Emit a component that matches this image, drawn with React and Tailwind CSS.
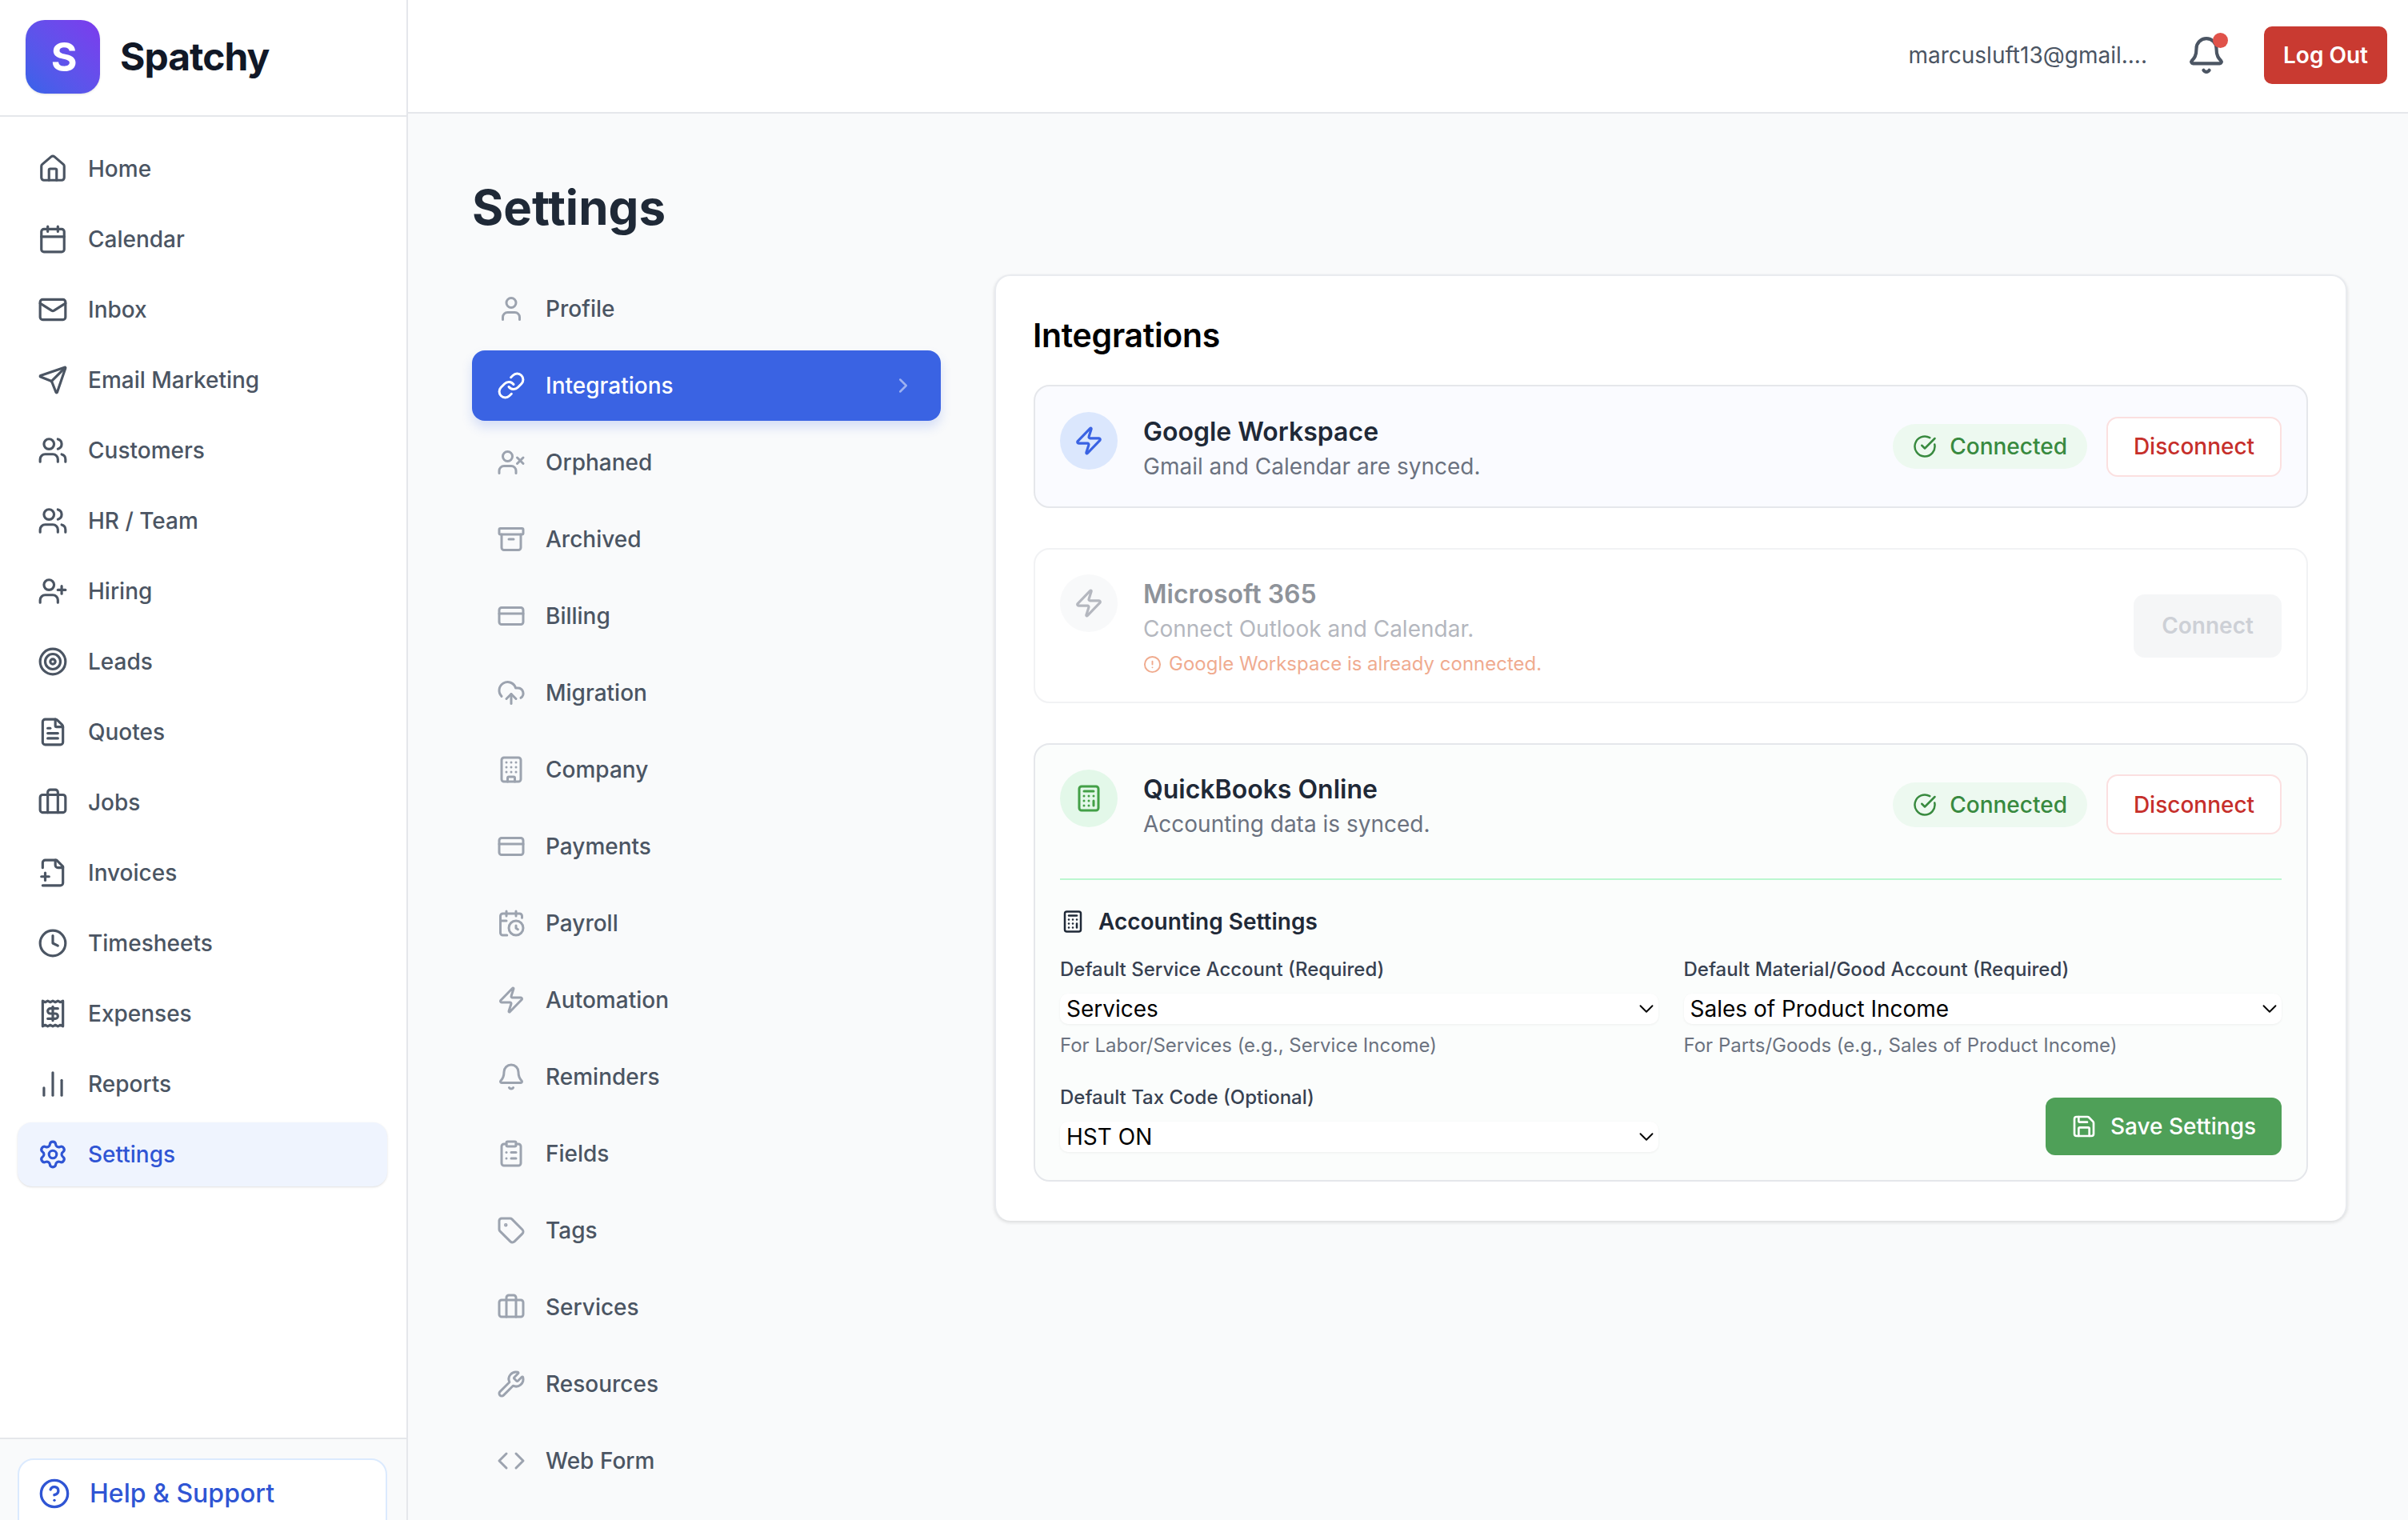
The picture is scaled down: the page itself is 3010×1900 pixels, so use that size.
import React from 'react';
import {
  House, Calendar, Mail, Send, Users, UserPlus, Target, FileText, Briefcase, Clock, Receipt,
  ChartNoAxesColumn, Settings, CircleHelp, Bell, User, Link, UserX, Archive, CreditCard, CloudUpload,
  Building, CalendarClock, Zap, ClipboardList, Tag, Wrench, Code, ChevronRight, ChevronDown, CircleCheckBig,
  CircleAlert, Calculator, Save,
} from 'lucide-react';

// file outline with the plus sitting on the left edge
const FilePlusIcon = ({ size }) => (
  <svg width={size} height={size} viewBox="0 0 24 24" fill="none" stroke="currentColor" strokeWidth="2" strokeLinecap="round" strokeLinejoin="round" className="shrink-0">
    <path d="M4 22h14a2 2 0 0 0 2-2V7l-5-5H6a2 2 0 0 0-2 2v4" />
    <path d="M14 2v4a2 2 0 0 0 2 2h4" />
    <path d="M3 15h6" />
    <path d="M6 12v6" />
  </svg>
);

const mainNav = [
  { label: 'Home', icon: House },
  { label: 'Calendar', icon: Calendar },
  { label: 'Inbox', icon: Mail },
  { label: 'Email Marketing', icon: Send },
  { label: 'Customers', icon: Users },
  { label: 'HR / Team', icon: Users },
  { label: 'Hiring', icon: UserPlus },
  { label: 'Leads', icon: Target },
  { label: 'Quotes', icon: FileText },
  { label: 'Jobs', icon: Briefcase },
  { label: 'Invoices', icon: FilePlusIcon },
  { label: 'Timesheets', icon: Clock },
  { label: 'Expenses', icon: Receipt },
  { label: 'Reports', icon: ChartNoAxesColumn },
  { label: 'Settings', icon: Settings, active: true },
];

const settingsNav = [
  { label: 'Profile', icon: User },
  { label: 'Integrations', icon: Link, active: true },
  { label: 'Orphaned', icon: UserX },
  { label: 'Archived', icon: Archive },
  { label: 'Billing', icon: CreditCard },
  { label: 'Migration', icon: CloudUpload },
  { label: 'Company', icon: Building },
  { label: 'Payments', icon: CreditCard },
  { label: 'Payroll', icon: CalendarClock },
  { label: 'Automation', icon: Zap },
  { label: 'Reminders', icon: Bell },
  { label: 'Fields', icon: ClipboardList },
  { label: 'Tags', icon: Tag },
  { label: 'Services', icon: Briefcase },
  { label: 'Resources', icon: Wrench },
  { label: 'Web Form', icon: Code },
];

const Sidebar = () => (
  <aside className="w-[510px] shrink-0 h-full flex flex-col bg-white border-r-2 border-[#e5e7eb]">
    <div className="h-[146px] shrink-0 flex items-center gap-[25px] pl-[32px] pb-[2px] border-b-2 border-[#e5e7eb]">
      <div className="w-[93px] h-[92px] pl-[3px] rounded-[24px] bg-linear-to-tr from-[#3563e9] to-[#7c3aed] shadow-sm flex items-center justify-center text-white font-bold text-[50px]">
        S
      </div>
      <span className="text-[48px] font-bold text-[#111827] tracking-[-1px]">Spatchy</span>
    </div>

    <nav className="flex-1 flex flex-col gap-[8px] pl-[22px] pr-[24px] pt-[25px]">
      {mainNav.map((item) => (
        <div
          key={item.label}
          className={`h-[80px] shrink-0 flex items-center gap-[25px] pl-[25px] rounded-[18px] text-[28px] font-medium ${
            item.active ? 'bg-[#eff4fe] text-[#2f55d4] shadow-sm' : 'text-[#4b5563]'
          }`}
        >
          <item.icon size={38} strokeWidth={2} />
          <span>{item.label}</span>
        </div>
      ))}
    </nav>

    <div className="h-[103px] shrink-0 bg-[#f9fafb] border-t-2 border-[#e5e7eb] pl-[22px] pr-[24px] pt-[24px]">
      <div className="h-[100px] bg-white border-2 border-[#dbeafe] rounded-[20px] flex items-start gap-[24px] pl-[24px] pt-[22px]">
        <CircleHelp size={40} strokeWidth={2} className="text-[#2f55d4]" />
        <span className="text-[32px] leading-[40px] font-medium text-[#2f55d4]">Help &amp; Support</span>
      </div>
    </div>
  </aside>
);

const Topbar = () => (
  <header className="h-[142px] shrink-0 bg-white border-b-2 border-[#e5e7eb] flex items-center justify-end pr-[26px] pb-[3px]">
    <span className="text-[28px] text-[#4b5563] mr-[49px]">marcusluft13@gmail....</span>
    <div className="relative mr-[47px]">
      <Bell size={50} strokeWidth={2} className="text-[#4b5563]" />
      <span className="absolute top-[-3px] right-[-2px] w-[19px] h-[19px] rounded-full bg-[#e0524a]" />
    </div>
    <button className="w-[154px] h-[72px] rounded-[10px] bg-[#c93a31] text-white text-[28px] font-semibold">Log Out</button>
  </header>
);

const SettingsNav = () => (
  <div className="w-[586px] shrink-0 flex flex-col gap-[8px]">
    {settingsNav.map((item) => (
      <div
        key={item.label}
        className={`h-[88px] shrink-0 flex items-center gap-[25px] pl-[31px] pr-[32px] rounded-[16px] text-[28px] font-medium ${
          item.active
            ? 'bg-[#3a63e3] text-white shadow-[0_8px_14px_rgba(58,99,227,0.18)]'
            : 'text-[#4b5563]'
        }`}
      >
        <item.icon size={36} strokeWidth={2} className={item.active ? 'text-white' : 'text-[#9ca3af]'} />
        <span className="flex-1">{item.label}</span>
        {item.active && <ChevronRight size={30} className="text-white opacity-50" />}
      </div>
    ))}
  </div>
);

const ConnectedActions = () => (
  <div className="flex items-center gap-[24px]">
    <div className="h-[56px] flex items-center gap-[16px] px-[25px] rounded-full bg-[#edf9f0] text-[#388a3f] text-[28px] font-medium">
      <CircleCheckBig size={30} strokeWidth={2} />
      <span>Connected</span>
    </div>
    <button className="w-[219px] h-[75px] rounded-[14px] border-2 border-[#fbe0e0] bg-white text-[#c62f2b] text-[28px] font-medium">
      Disconnect
    </button>
  </div>
);

const Title = ({ children }) => (
  <h3 className="text-[32px] leading-[50px] font-semibold text-[#1f2937]">{children}</h3>
);

const Subtitle = ({ children }) => (
  <p className="-mt-[1px] text-[28px] leading-[38px] text-[#6b7280]">{children}</p>
);

const SelectBox = ({ value }) => (
  <div className="h-[38px] flex items-center justify-between pl-[8px] rounded-[10px] bg-white shadow-[0_1px_3px_rgba(0,0,0,0.06)] text-[28px] text-black">
    <span>{value}</span>
    <ChevronDown size={30} strokeWidth={1.5} />
  </div>
);

const Label = ({ children }) => (
  <label className="block text-[24px] leading-[34px] font-medium text-[#374151]">{children}</label>
);

const Hint = ({ children }) => (
  <p className="mt-[11px] text-[24px] leading-[32px] text-[#6b7280]">{children}</p>
);

const IntegrationsCard = () => (
  <div className="flex-1 mt-[1px] h-[1183px] bg-white border-2 border-[#e9ebef] border-b-0 rounded-[20px] shadow-[0_2px_4px_rgba(0,0,0,0.13)] px-[47px] pt-[46px]">
    <h2 className="text-[41px] leading-[56px] font-semibold text-black tracking-[-0.3px] -ml-[1px]">Integrations</h2>

    {/* Google Workspace */}
    <div className="mt-[34px] h-[154px] flex items-center justify-between border-2 border-[#e5e7eb] rounded-[20px] bg-[#fafbff] px-[31px]">
      <div className="flex items-start gap-[32px]">
        <div className="w-[72px] h-[72px] rounded-full bg-[#dbe7fd] flex items-center justify-center text-[#3a63e3]">
          <Zap size={38} strokeWidth={2} />
        </div>
        <div>
          <Title>Google Workspace</Title>
          <Subtitle>Gmail and Calendar are synced.</Subtitle>
        </div>
      </div>
      <ConnectedActions />
    </div>

    {/* Microsoft 365 */}
    <div className="mt-[50px] h-[194px] flex items-center justify-between border-2 border-[#e5e7eb] rounded-[20px] bg-white px-[31px] opacity-50">
      <div className="flex items-start gap-[32px]">
        <div className="w-[72px] h-[72px] rounded-full bg-[#f3f4f6] flex items-center justify-center text-[#6b7280]">
          <Zap size={38} strokeWidth={2} />
        </div>
        <div>
          <Title>Microsoft 365</Title>
          <Subtitle>Connect Outlook and Calendar.</Subtitle>
          <div className="mt-[9px] h-[32px] flex items-center gap-[9px] text-[24px] text-[#e2591f]">
            <CircleAlert size={23} strokeWidth={2} />
            <span>Google Workspace is already connected.</span>
          </div>
        </div>
      </div>
      <button className="w-[185px] h-[79px] rounded-[14px] bg-[#eceef1] text-[#9ca3af] text-[28px] font-semibold">Connect</button>
    </div>

    {/* QuickBooks Online */}
    <div className="mt-[50px] h-[548px] border-2 border-[#e5e7eb] rounded-[20px] bg-[#fbfdfc] px-[31px] pt-[31px]">
      <div className="flex items-center justify-between">
        <div className="flex items-start gap-[32px]">
          <div className="w-[72px] h-[72px] rounded-full bg-[#e3f8e9] flex items-center justify-center text-[#43a047]">
            <Calculator size={36} strokeWidth={2} />
          </div>
          <div>
            <Title>QuickBooks Online</Title>
            <Subtitle>Accounting data is synced.</Subtitle>
          </div>
        </div>
        <ConnectedActions />
      </div>

      <div className="mt-[49px] border-t-2 border-[#bbf7d0] pt-[32px]">
        <div className="h-[40px] flex items-center gap-[17px] pl-[1px] text-[28px] font-semibold text-[#1f2937]">
          <Calculator size={30} strokeWidth={2} />
          <span>Accounting Settings</span>
        </div>
        <div className="mt-[23px] grid grid-cols-2 gap-x-[32px] gap-y-[32px]">
          <div>
            <Label>Default Service Account (Required)</Label>
            <div className="mt-[13px]"><SelectBox value="Services" /></div>
            <Hint>For Labor/Services (e.g., Service Income)</Hint>
          </div>
          <div>
            <Label>Default Material/Good Account (Required)</Label>
            <div className="mt-[13px]"><SelectBox value="Sales of Product Income" /></div>
            <Hint>For Parts/Goods (e.g., Sales of Product Income)</Hint>
          </div>
          <div className="pb-[4px]">
            <Label>Default Tax Code (Optional)</Label>
            <div className="mt-[13px]"><SelectBox value="HST ON" /></div>
          </div>
          <div className="flex items-end justify-end">
            <button className="w-[295px] h-[72px] rounded-[12px] bg-[#4fa058] text-white text-[28px] font-medium flex items-center justify-center gap-[17px]">
              <Save size={32} strokeWidth={2} />
              <span>Save Settings</span>
            </button>
          </div>
        </div>
      </div>
    </div>
  </div>
);

const App = () => (
  <div className="w-[3010px] h-[1900px] flex overflow-hidden bg-[#f9fafb] [font-family:Inter,sans-serif]">
    <Sidebar />
    <main className="flex-1 flex flex-col min-w-0">
      <Topbar />
      <div className="flex-1 pl-[80px] pr-[76px] pt-[82px] overflow-hidden">
        <h1 className="text-[60px] leading-[70px] font-bold text-[#1f2937]">Settings</h1>
        <div className="mt-[48px] flex items-start gap-[67px]">
          <SettingsNav />
          <IntegrationsCard />
        </div>
      </div>
    </main>
  </div>
);

export default App;
